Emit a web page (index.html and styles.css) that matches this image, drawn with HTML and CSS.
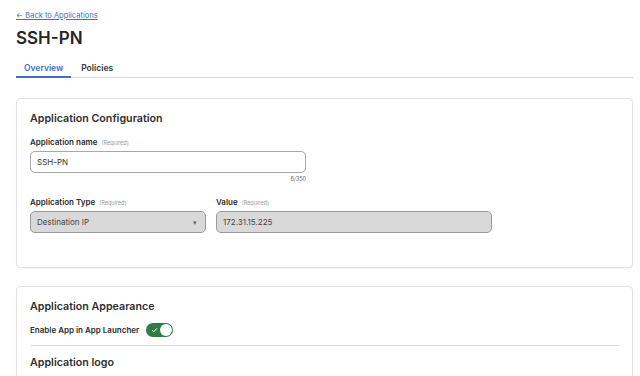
FILE: index.html
```html
<!DOCTYPE html>
<html lang="en">
<head>
  <meta charset="UTF-8">
  <title>SSH-PN</title>
  <link rel="stylesheet" href="styles.css">
</head>
<body>

<div class="page">
  <a class="back-link" href="#">← Back to Applications</a>
  <h1 class="app-title">SSH-PN</h1>

  <div class="tabs">
    <a class="tab active" href="#">Overview</a>
    <a class="tab" href="#">Policies</a>
  </div>

  <div class="card">
    <h2 class="card-title">Application Configuration</h2>

    <div class="field field-name">
      <label class="field-label">Application name <span class="req">(Required)</span></label>
      <input class="text-input" type="text" value="SSH-PN">
      <div class="counter">6/350</div>
    </div>

    <div class="field-row">
      <div class="field field-type">
        <label class="field-label">Application Type <span class="req">(Required)</span></label>
        <div class="select-box">
          <span>Destination IP</span>
          <span class="caret">▾</span>
        </div>
      </div>
      <div class="field field-value">
        <label class="field-label">Value <span class="req">(Required)</span></label>
        <div class="text-input disabled">172.31.15.225</div>
      </div>
    </div>
  </div>

  <div class="card card-appearance">
    <h2 class="card-title">Application Appearance</h2>
    <div class="toggle-row">
      <span class="toggle-label">Enable App in App Launcher</span>
      <span class="toggle on">
        <svg class="toggle-check" width="7" height="6" viewBox="0 0 7 6"><path d="M1 3.2 L2.8 4.8 L6 1.2" fill="none" stroke="#fff" stroke-width="1"/></svg>
        <span class="knob"></span>
      </span>
    </div>
    <div class="divider"></div>
    <h2 class="card-title logo-title">Application logo</h2>
  </div>
</div>

</body>
</html>
```

FILE: styles.css
```css
body {
  margin: 0;
  padding: 0;
  font-family: Inter, "Open Sans", Arial, sans-serif;
  color: #2f2f2f;
  background: #fff;
}

.page {
  width: 617px;
  padding: 11px 0 0 16px;
}

.back-link {
  display: block;
  font-size: 7.5px;
  color: #3d6fc2;
  text-decoration: underline;
  line-height: 10px;
}

.app-title {
  margin: 6px 0 0;
  font-size: 17px;
  font-weight: 600;
  line-height: 22px;
  color: #262626;
}

.tabs {
  display: flex;
  margin-top: 13px;
  border-bottom: 1px solid #d8d8d8;
}

.tab {
  display: block;
  padding: 0 8px 2px;
  margin-right: 2px;
  font-size: 8.5px;
  font-weight: 600;
  line-height: 12px;
  color: #333;
  text-decoration: none;
  border-bottom: 2px solid transparent;
  margin-bottom: -1px;
}

.tab.active {
  color: #3d6fc2;
  border-bottom-color: #3d6fc2;
}

.card {
  margin-top: 20px;
  border: 1px solid #e2e2e2;
  border-radius: 4px;
  padding: 13px 13px 0;
  height: 155px;
  box-shadow: 0 1px 2px rgba(0,0,0,0.04);
}

.card-title {
  margin: 0;
  font-size: 10.7px;
  font-weight: 600;
  line-height: 14px;
  color: #2f2f2f;
}

.field-name {
  margin-top: 11px;
  width: 276px;
}

.field-label {
  display: block;
  font-size: 8px;
  font-weight: 600;
  line-height: 10px;
  color: #2b2b2b;
  margin-bottom: 3px;
}

.req {
  font-size: 5.5px;
  font-weight: 400;
  color: #999;
  margin-left: 2px;
}

.text-input {
  box-sizing: border-box;
  display: flex;
  align-items: center;
  width: 100%;
  height: 22px;
  padding: 0 6px;
  border: 1px solid #a8a8a8;
  border-radius: 5px;
  font-family: inherit;
  font-size: 8px;
  color: #333;
  background: #fff;
  outline: none;
}

.text-input.disabled {
  background: #d9d9d9;
  border-color: #9a9a9a;
  color: #444;
}

.counter {
  text-align: right;
  font-size: 5.5px;
  color: #666;
  margin-top: 3px;
  line-height: 7px;
}

.field-row {
  display: flex;
  gap: 10px;
  margin-top: 14px;
}

.field-type {
  width: 176px;
}

.field-value {
  width: 276px;
}

.select-box {
  box-sizing: border-box;
  display: flex;
  align-items: center;
  justify-content: space-between;
  height: 22px;
  padding: 0 6px;
  border: 1px solid #9a9a9a;
  border-radius: 5px;
  background: #d9d9d9;
  font-size: 8px;
  color: #444;
}

.caret {
  font-size: 7px;
  color: #666;
  margin-right: 2px;
}

.card-appearance {
  margin-top: 18px;
  height: 120px;
  padding-top: 13px;
}

.toggle-row {
  display: flex;
  align-items: center;
  gap: 7px;
  margin-top: 9px;
}

.toggle-label {
  font-size: 8px;
  font-weight: 600;
  color: #2b2b2b;
}

.toggle {
  position: relative;
  box-sizing: border-box;
  width: 27px;
  height: 14px;
  border-radius: 7px;
  background: #2f7d44;
  display: flex;
  align-items: center;
  padding: 0 5px;
}

.knob {
  position: absolute;
  right: 1px;
  top: 1px;
  width: 12px;
  height: 12px;
  border-radius: 50%;
  background: #fff;
}

.divider {
  margin-top: 8px;
  border-top: 1px solid #dcdcdc;
}

.logo-title {
  margin-top: 10px;
}
```
